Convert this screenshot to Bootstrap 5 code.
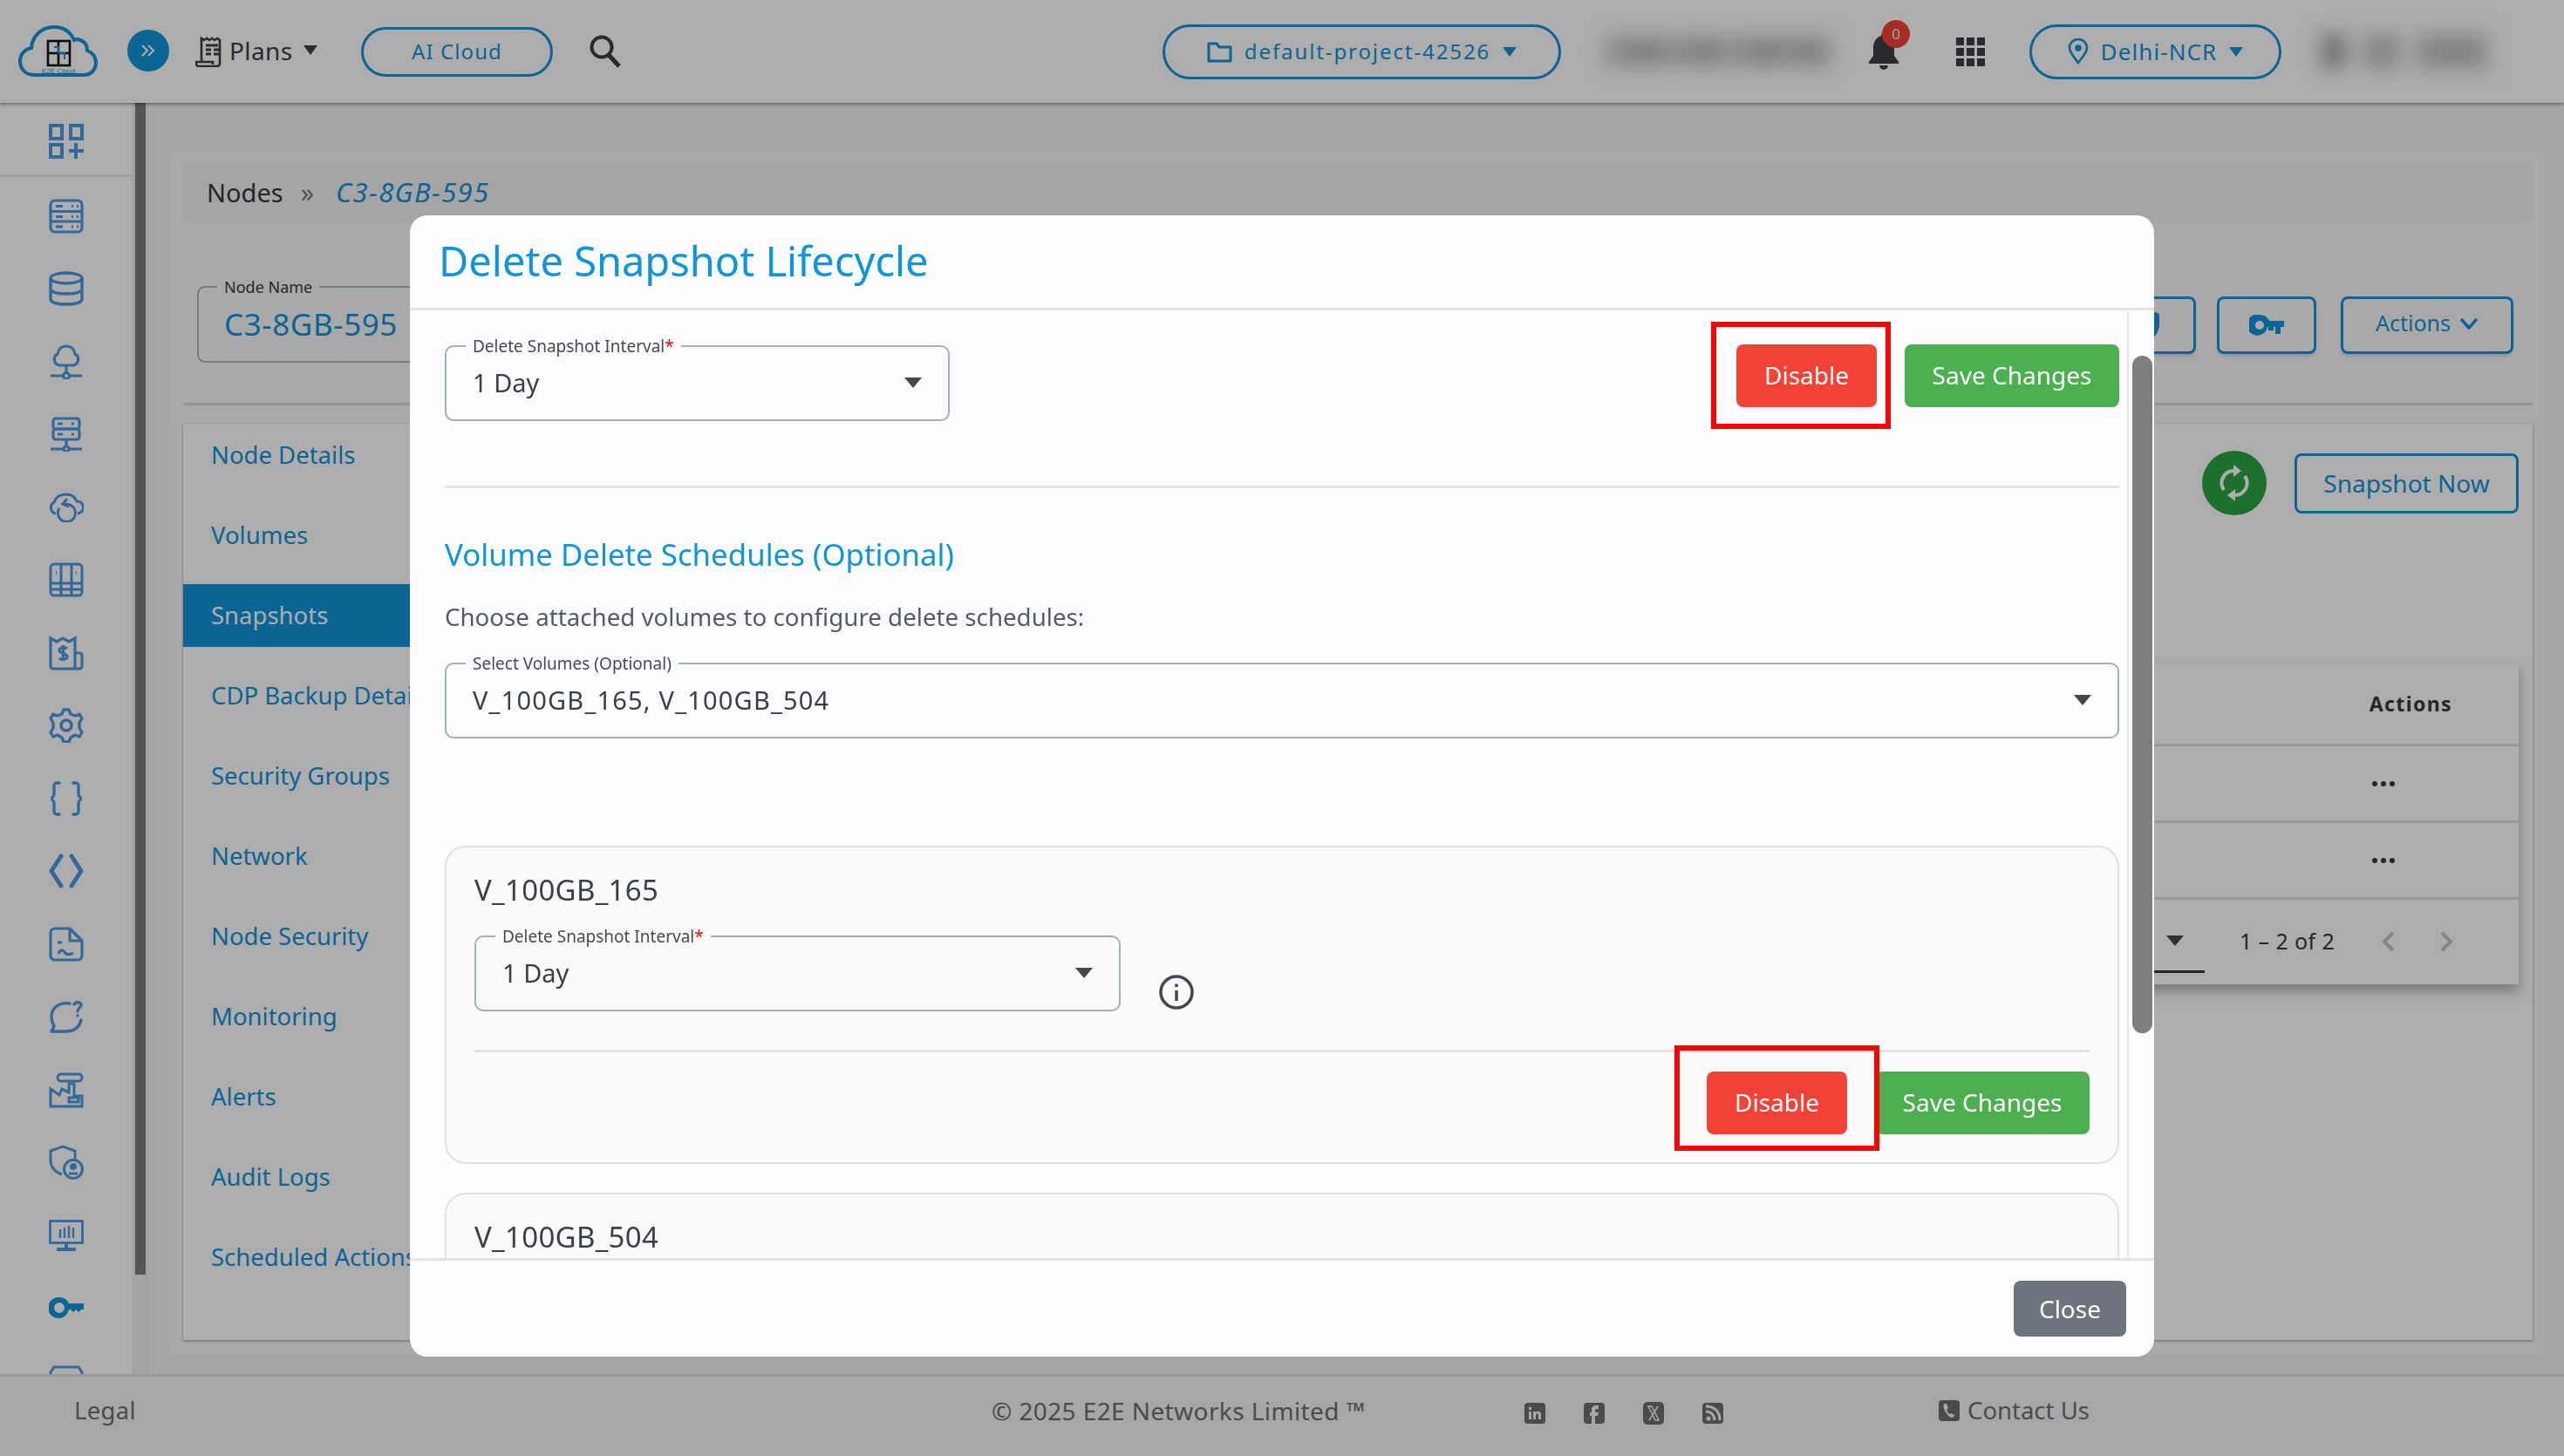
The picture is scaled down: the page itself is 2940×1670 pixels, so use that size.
<!doctype html>
<html lang="en">
<head>
<meta charset="utf-8">
<title>Delete Snapshot Lifecycle</title>
<link href="https://cdn.jsdelivr.net/npm/bootstrap@5.3.0/dist/css/bootstrap.min.css" rel="stylesheet">
<style>
:root{--brand:#0f95dc}
html,body{height:100%}
body{font-family:"Noto Sans","Open Sans",sans-serif;color:#333a42;background:#f4f4f4;font-size:27px;overflow:hidden}
svg{display:block;flex:none}
/* top bar */
.topbar{height:118px;background:#fff;flex:none;box-shadow:0 2px 3px rgba(0,0,0,.35);position:relative;z-index:2}
.tb-logo{margin-left:20px;width:93px;height:62px}
.tb-toggle{margin-left:33px;width:48px;height:48px;border-radius:50%;background:var(--brand);color:#fff;margin-top:-2px}
.tb-plans{margin-left:30px;color:#3a3f44}
.tb-plans span{margin-left:6px;width:74px;font-size:28px;letter-spacing:.4px;margin-top:-3px}
.tb-plans .caret-x{margin-left:11px;margin-top:-3px}
.caret-x{width:0;height:0;border-left:8px solid transparent;border-right:8px solid transparent;border-top:11px solid currentColor}
.tb-pill{border:3px solid var(--brand);border-radius:32px;color:var(--brand);background:transparent;letter-spacing:1.1px;padding:0}
.pill-ai{margin-left:50px;width:220px;height:57px;font-size:24px}
.tb-search{margin-left:42px;width:36px;height:38px;color:#3a3f44}
.pill-proj{margin-left:621px;width:457px;height:63px;font-size:24px;gap:14px;letter-spacing:1.9px}
.pill-loc{margin-left:0;width:289px;height:63px;font-size:26px;gap:14px}
.blur-a{margin-left:50px;width:262px;height:34px;background:linear-gradient(90deg,#c9c9c9,#a8a8a8 18%,#c4c4c4 30%,#a8a8a8 45%,#cccccc 55%,#a6a6a6 70%,#bdbdbd 80%,#a6a6a6 92%,#ddd);filter:blur(11px);opacity:.8}
.tb-bell{margin-left:40px;width:48px;height:60px;color:#3a3f44}
.tb-badge{position:absolute;top:-6px;left:16px;width:32px;height:32px;border-radius:50%;background:#f44336;color:#eee;font-size:17px;line-height:32px;text-align:center}
.tb-grid{margin-left:53px;width:33px;height:33px;color:#3a3f44}
.tb-gap{margin-left:51px}
.blur-b{margin-left:46px;width:200px;height:40px;background:linear-gradient(90deg,#8c8c8c 0 26px,#eee 26px 52px,#b4b4b4 52px 86px,#eee 86px 112px,#b4b4b4 112px 190px,#fff 190px);filter:blur(11px);opacity:.8}
/* rail */
.rail{width:171px;flex:none;background:#fff;position:relative}
.rail-list{width:151px;height:100%;overflow:hidden;color:#4a9be2}
.rail-cell{height:83.500px;flex:none;color:#4a9be2}
.rail-cell:first-child{height:85px;padding-top:6px;border-bottom:3px solid #ececec;margin-bottom:3px}
.rail-track{width:20px;background:#f1f1f1}
.rail-thumb{width:12px;height:1344px;margin-left:4px;background:#7d7d7d}
/* main */
.main-wrap{min-width:0;background:#f4f4f4;border-left:1px solid #f9f9f9}
.panel-x{margin:54px 21px 22px 21px;background:#fafafa;padding:16px 15px 16px 17px;height:calc(100% - 76px)}
.crumbs{height:68px;background:#f4f4f4;border-radius:8px;padding-left:27px;font-size:29px;color:#333a42;padding-bottom:3px}
.crumbs i{color:var(--brand);margin-left:25px;font-size:31px;letter-spacing:1.400px}
.crumbs em{font-style:normal;color:#7a7f85;margin-left:20px;font-size:30px}
.head-row{margin-top:72px;height:88px;padding-left:16px;position:relative}
.node-fld{width:520px;height:88px;border:2px solid #a9b8bb;border-radius:9px;padding:0 29px;color:var(--brand);font-size:35px;letter-spacing:.6px;line-height:84px;margin:0}
.node-fld legend{float:none;width:auto;font-size:18px;letter-spacing:0;color:#333a42;padding:0 8px;margin:0 0 0 -8px;line-height:2px;height:2px}
.head-tools{margin-left:auto;margin-right:22px;margin-top:12px}
.tool-b{width:114px;height:66px;border:3px solid var(--brand);border-radius:8px;background:transparent;color:var(--brand);box-shadow:0 3px 3px rgba(0,0,0,.12);padding:0}
.tool-sh{margin-right:24px}
.tool-ky{margin-right:28px}
.tool-act{width:198px;font-size:25px;gap:10px;padding-bottom:4px}
.rule-x{height:3px;background:#dcdcdc;margin-top:46px}
.work-card{margin-top:21px;height:1051px;background:#fff;box-shadow:0 1px 3px rgba(0,0,0,.4);position:relative}
.side-tabs{width:360px;flex:none;padding-top:0;white-space:nowrap}
.tab-i{height:72px;margin-bottom:20px;padding-left:32px;font-size:27.500px;color:var(--brand);display:flex;align-items:center}
.tab-i.sel{background:var(--brand);color:#fff}
.work-r{min-width:0;padding-right:16px}
.snap-row{margin-top:33px;gap:32px;height:70px}
.sync-c{width:74px;height:74px;border-radius:50%;background:#28a541;color:#fff}
.snap-b{width:257px;height:69px;border:3px solid var(--brand);border-radius:8px;background:transparent;color:var(--brand);font-size:28px;padding:0}
.tbl-card{margin-top:172px;height:368px;background:#fff;box-shadow:0 8px 14px rgba(0,0,0,.3);margin-left:200px}
.tbl-line{border-bottom:3px solid #e2e2e2;height:88px;padding-right:72px}
.tbl-hd{height:95px;font-weight:700;letter-spacing:1.400px;font-size:23px;padding-right:76px}
.dots3{gap:4px;margin-right:70px}
.dots3 b{width:6px;height:6px;border-radius:50%;background:#333a42;display:block}
.tbl-foot{height:95px;color:#333a42;font-size:25px;letter-spacing:.4px;padding-right:0}
.sel-under{width:400px;height:70px;border-bottom:3px solid #333a42;margin-bottom:-2px;padding-right:24px}
.pager-t{margin-left:40px;width:110px;white-space:nowrap}
.pager-c{color:#c8c8c8;margin-left:52px}
.pager-end{margin-right:74px}
/* footer */
.foot-bar{height:94px;flex:none;background:#f6f6f6;border-top:3px solid #dcdfe2;color:#6f6f6f;font-size:27.500px;position:relative;z-index:2;padding-bottom:13px}
.foot-legal{margin-left:85px;width:1052px;letter-spacing:.3px}
.foot-copy{width:611px;font-size:28px;letter-spacing:.4px;white-space:nowrap}
.foot-soc{gap:44px;width:475px;margin-top:6px}
.foot-soc svg{color:#6f6f6f}
.foot-contact{gap:9px;white-space:nowrap}
/* modal */
.modal-backdrop.show{opacity:.32}
.snap-dialog{max-width:2000px;width:2000px;margin:247px auto 0}
.snap-dialog .modal-content{height:1309px;border:0;border-radius:20px;background:#fcfcfe;overflow:hidden;position:relative}
.snap-dialog .modal-header{height:109px;padding:0 33px 2px;border-bottom:3px solid #e2e4e6;flex:none}
.m-title{font-size:47px;font-weight:400;color:var(--brand);line-height:1;margin:0}
.snap-dialog .modal-body{flex:1;padding:0 40px;overflow:hidden;position:relative;min-height:0}
.m-track{position:absolute;top:0;bottom:0;right:0;width:31px;border-left:2px solid #e6e6e6;background:#fcfcfe;z-index:3}
.m-thumb{position:absolute;left:4px;top:52px;width:23px;height:777px;border-radius:12px;background:#7f7f7f}
.snap-dialog .modal-footer{height:113px;padding:0 32px;border-top:3px solid #e2e4e6;flex:none}
.close-b{width:129px;height:64px;font-size:28px;background:#6c757d;border:0;color:#fff;padding:0;border-radius:8px;margin:0}
.fld{border:2px solid #9fb1b9;border-radius:10px;padding:0 30px;font-size:29px;color:#3a4047;height:87px;margin:0;min-width:0}
.fld legend{float:none;width:auto;font-size:19px;color:#444b52;padding:0 8px;margin:0 0 0 -8px;line-height:2px;height:2px}
.fld legend s{text-decoration:none;color:#f00}
.fld .fld-v{height:81px}
.vol-val{letter-spacing:1.200px}
.caret-d{width:0;height:0;border-left:10px solid transparent;border-right:10px solid transparent;border-top:12px solid #43484e}
.top-row{padding-top:40px;height:204px;border-bottom:3px solid #e4e4e4}
.w-top{width:579px}
.act-pair{gap:32px;margin-top:-1px}
.act-b{height:72px;font-size:28px;color:#fff;border:0;border-radius:8px;padding:0 0 2px}
.act-d{width:161px;background:#f44336}
.act-s{width:246px;background:#4caf50}
.hot-box{position:absolute;border:6px solid #f00;pointer-events:none;z-index:2}
.hot-a{left:1492px;top:13px;width:206px;height:123px}
.hot-b{left:1450px;top:843px;width:235px;height:121px}
.sec-h{font-size:34.800px;color:var(--brand);font-weight:400;margin:53px 0 0;line-height:46px}
.sec-p{font-size:27.700px;color:#555c63;margin:30px 0 0;line-height:36px}
.sel-wide{margin-top:35px}
.sub-card{background:#fafafa;border:2px solid #e2e2e2;border-radius:24px;padding:0 32px}
.sub-a{margin-top:123px;height:365px}
.sub-b{margin-top:33px;height:200px}
.sub-t{font-size:33px;color:#3a4047;padding-top:28px;line-height:42px;letter-spacing:.3px}
.sub-f{margin-top:31px;gap:43px}
.w-sub{width:741px}
.info-i{margin-top:44px;color:#43484e}
.sub-rule{height:3px;background:#e2e2e2;margin-top:44px}
.sub-acts{margin-top:22px;gap:32px}
</style>
</head>
<body class="d-flex flex-column">

<header class="topbar d-flex align-items-center">
  <svg class="tb-logo" viewBox="0 0 93 62" fill="none">
    <path d="M20 58C8 58 3 50 3 42c0-8 6-14 13-15C17 13 28 3 42 3c11 0 19 6 23 15 2-1 5-1 7 0 6 2 8 7 8 12 7 3 10 8 10 14 0 8-6 14-14 14Z" stroke="#0f95dc" stroke-width="4"/>
    <rect x="35" y="19" width="25" height="28" fill="none" stroke="#111" stroke-width="2.600"/>
    <path d="M47 19v28M35 33h25" stroke="#111" stroke-width="2.600"/>
    <path d="M42 26h5v7M47 33h7v7" stroke="#0f95dc" stroke-width="2"/>
    <text x="47" y="56" font-size="8" text-anchor="middle" fill="#0f95dc" font-family="Liberation Sans">E2E Cloud</text>
  </svg>
  <button class="tb-toggle btn d-flex align-items-center justify-content-center p-0" type="button" aria-label="Expand">
    <svg width="20" height="20" viewBox="0 0 20 20" fill="none" stroke="#fff" stroke-width="2"><path d="M3 4l6 6-6 6M10 4l6 6-6 6"/></svg>
  </button>
  <div class="tb-plans d-flex align-items-center">
    <svg width="33" height="36" viewBox="0 0 33 36" fill="none" stroke="currentColor" stroke-width="2.600"><path d="M7 30V3l3 2 3-2 3 2 3-2 3 2 3-2 3 2v27a3 3 0 0 1-3 3H4a3 3 0 0 1-3-3v-2h19v3"/><path d="M12 11h14M12 16h6M21 16h6M12 21h6M21 21h6" stroke-width="3"/></svg>
    <span>Plans</span>
    <div class="caret-x"></div>
  </div>
  <button class="tb-pill pill-ai btn" type="button">AI Cloud</button>
  <svg class="tb-search" viewBox="0 0 36 38" fill="none" stroke="currentColor"><circle cx="14" cy="14" r="11.500" stroke-width="4"/><path d="M22 23l12 13" stroke-width="5"/></svg>
  <button class="tb-pill pill-proj btn d-flex align-items-center justify-content-center" type="button">
    <svg width="29" height="25" viewBox="0 0 29 25" fill="none" stroke="currentColor" stroke-width="3"><path d="M2 3h9l3 4h13v16H2z" stroke-linejoin="round"/></svg>
    <span>default-project-42526</span>
    <div class="caret-x"></div>
  </button>
  <div class="blur-a"></div>
  <div class="tb-bell position-relative">
    <svg width="36" height="44" viewBox="0 0 36 44" class="mt-2" fill="currentColor"><path d="M18 0c2 0 3 2 3 4 6 2 9 7 9 14v9l5 7v2H1v-2l5-7v-9c0-7 3-12 9-14 0-2 1-4 3-4Z"/><path d="M13 38h10a5 5 0 0 1-10 0Z"/></svg>
    <span class="tb-badge">0</span>
  </div>
  <svg class="tb-grid" viewBox="0 0 33 33" fill="currentColor"><rect width="9" height="9"/><rect x="12" width="9" height="9"/><rect x="24" width="9" height="9"/><rect y="12" width="9" height="9"/><rect x="12" y="12" width="9" height="9"/><rect x="24" y="12" width="9" height="9"/><rect y="24" width="9" height="9"/><rect x="12" y="24" width="9" height="9"/><rect x="24" y="24" width="9" height="9"/></svg>
  <div class="tb-gap"></div>
  <button class="tb-pill pill-loc btn d-flex align-items-center justify-content-center" type="button">
    <svg width="24" height="30" viewBox="0 0 24 30" fill="none" stroke="currentColor" stroke-width="2.600"><path d="M12 28C6 20 2 16 2 11a10 10 0 0 1 20 0c0 5-4 9-10 17Z"/><circle cx="12" cy="11" r="2.500" fill="currentColor"/></svg>
    <span>Delhi-NCR</span>
    <div class="caret-x"></div>
  </button>
  <div class="blur-b"></div>
</header>

<div class="d-flex flex-grow-1 overflow-hidden">
  <aside class="rail d-flex">
    <div class="rail-list d-flex flex-column">
      <div class="rail-cell d-flex align-items-center justify-content-center"><svg width="40" height="40" viewBox="0 0 40 40" fill="none" stroke="currentColor" stroke-width="4"><rect x="2" y="2" width="13" height="15"/><rect x="25" y="2" width="13" height="15"/><rect x="2" y="24" width="13" height="14"/><path d="M31 22v18M23 31h17"/></svg></div>
      <div class="rail-cell d-flex align-items-center justify-content-center"><svg width="40" height="40" viewBox="0 0 40 40" fill="none" stroke="currentColor" stroke-width="3.200"><rect x="2" y="2" width="36" height="36" rx="5"/><path d="M2 14.500h36M2 26h36"/><path d="M8 8.500h8M8 20.500h8M8 32h8M26 8.500h2M32 8.500h2M26 20.500h2M32 20.500h2M26 32h2M32 32h2"/></svg></div>
      <div class="rail-cell d-flex align-items-center justify-content-center"><svg width="40" height="40" viewBox="0 0 40 40" fill="none" stroke="currentColor" stroke-width="3.400"><ellipse cx="20" cy="8" rx="18" ry="6"/><path d="M2 8v24c0 4 8 6 18 6s18-2 18-6V8M2 20c0 4 8 6 18 6s18-2 18-6"/></svg></div>
      <div class="rail-cell d-flex align-items-center justify-content-center"><svg width="40" height="40" viewBox="0 0 40 40" fill="none" stroke="currentColor" stroke-width="3.200"><path d="M12 24a7 7 0 0 1-2-13C11 5 15 2 20 2s9 3 10 9a7 7 0 0 1-2 13Z"/><path d="M20 24v8M2 36h14M24 36h14"/><circle cx="20" cy="36" r="3.500"/></svg></div>
      <div class="rail-cell d-flex align-items-center justify-content-center"><svg width="40" height="40" viewBox="0 0 40 40" fill="none" stroke="currentColor" stroke-width="3.200"><rect x="5" y="2" width="30" height="12" rx="3"/><rect x="5" y="14" width="30" height="12" rx="3"/><path d="M10 8h6M10 20h6M26 8h3M26 20h3M20 26v7M2 37h14M24 37h14"/><circle cx="20" cy="37" r="3"/></svg></div>
      <div class="rail-cell d-flex align-items-center justify-content-center"><svg width="40" height="34" viewBox="0 0 40 34" fill="none" stroke="currentColor" stroke-width="3"><path d="M8 24a7 7 0 0 1-2-13C8 5 13 2 20 2c6 0 10 3 12 8a7 7 0 0 1 1 14"/><path d="M12 18a10 10 0 1 0 5-4"/><path d="M21 7l-5 6 7 3"/></svg></div>
      <div class="rail-cell d-flex align-items-center justify-content-center"><svg width="40" height="40" viewBox="0 0 40 40" fill="none" stroke="currentColor" stroke-width="3"><rect x="2" y="2" width="36" height="36" rx="4"/><path d="M14 2v36M26 2v36M2 24h36M2 31h36"/><path d="M8 12h1M31 12h1" stroke-width="3.500"/></svg></div>
      <div class="rail-cell d-flex align-items-center justify-content-center"><svg width="40" height="40" viewBox="0 0 40 40" fill="none" stroke="currentColor" stroke-width="3.200"><path d="M30 38H5a3 3 0 0 1-3-3V3l7 4 7-4 7 4 7-4v35"/><path d="M30 20h5a3 3 0 0 1 3 3v12a3 3 0 0 1-3 3h-5"/><path d="M21 15c-2-2-9-2-9 2s9 3 9 7-7 4-9 2M16.500 11v18"/></svg></div>
      <div class="rail-cell d-flex align-items-center justify-content-center"><svg width="40" height="40" viewBox="0 0 40 40" fill="none" stroke="currentColor" stroke-width="3.400"><circle cx="20" cy="20" r="6"/><path d="M17 2h6l2 5 5 2 5-2 3 5-3 5v6l3 5-3 5-5-2-5 3-2 5h-6l-2-5-5-3-5 2-3-5 3-5v-6l-3-5 3-5 5 2 5-2Z" stroke-linejoin="round"/></svg></div>
      <div class="rail-cell d-flex align-items-center justify-content-center"><svg width="40" height="40" viewBox="0 0 40 40" fill="none" stroke="currentColor" stroke-width="3.400" stroke-linecap="round"><path d="M12 2H9a3 3 0 0 0-3 3v9c0 3-2 6-4 6 2 0 4 3 4 6v9a3 3 0 0 0 3 3h3M28 2h3a3 3 0 0 1 3 3v9c0 3 2 6 4 6-2 0-4 3-4 6v9a3 3 0 0 1-3 3h-3"/></svg></div>
      <div class="rail-cell d-flex align-items-center justify-content-center"><svg width="40" height="40" viewBox="0 0 40 40" fill="none" stroke="currentColor" stroke-width="5" stroke-linecap="round" stroke-linejoin="round"><path d="M14 3L3 20l11 17M26 3l11 17-11 17"/></svg></div>
      <div class="rail-cell d-flex align-items-center justify-content-center"><svg width="40" height="40" viewBox="0 0 40 40" fill="none" stroke="currentColor" stroke-width="3.200" stroke-linejoin="round"><path d="M24 2H7a5 5 0 0 0-5 5v26a5 5 0 0 0 5 5h26a5 5 0 0 0 5-5V16Z"/><path d="M24 2v14h14"/><path d="M10 18h5M11 31c2-5 5-5 7-2s5 4 10 1"/></svg></div>
      <div class="rail-cell d-flex align-items-center justify-content-center"><svg width="40" height="40" viewBox="0 0 40 40" fill="none" stroke="currentColor" stroke-width="3.400" stroke-linecap="round"><path d="M24 5C12 3 3 10 3 20c0 5 2 9 3 11-1 3-2 5-4 6h17c10 0 16-5 18-13"/><path d="M29 6c1-3 7-3 8 0s-4 4-4 8M33 19h.01"/></svg></div>
      <div class="rail-cell d-flex align-items-center justify-content-center"><svg width="40" height="42" viewBox="0 0 40 42" fill="none" stroke="currentColor" stroke-width="3"><path d="M2 40V20l10 7 3-7 8 4V14h6v14h9v12Z"/><path d="M14 3h20a3 3 0 0 1 0 8H14a3 3 0 0 1 0-8Z"/><rect x="23" y="30" width="11" height="5"/></svg></div>
      <div class="rail-cell d-flex align-items-center justify-content-center"><svg width="40" height="40" viewBox="0 0 40 40" fill="none" stroke="currentColor" stroke-width="3"><path d="M30 16V7L16 2 2 7v11c0 8 6 14 13 16"/><circle cx="28" cy="28" r="10.500"/><circle cx="28" cy="25" r="2.500" fill="currentColor"/><path d="M23 33h10"/></svg></div>
      <div class="rail-cell d-flex align-items-center justify-content-center"><svg width="40" height="36" viewBox="0 0 40 36" fill="none" stroke="currentColor" stroke-width="2.800"><rect x="1.500" y="1.500" width="37" height="25"/><path d="M13 11v10M18 9v12M23 7v14M28 9v12" stroke-width="2.400"/><path d="M20 27v6M9 34h22" stroke-width="4"/></svg></div>
      <div class="rail-cell d-flex align-items-center justify-content-center"><svg width="40" height="24" viewBox="0 0 40 24" fill="#0f95dc"><path d="M12 0a12 12 0 0 1 11 7h17v7h-3l-3 3-3-3-3 3-3-3h-2A12 12 0 1 1 12 0Zm0 6a6 6 0 1 0 0 12 6 6 0 0 0 0-12Z"/></svg></div>
      <div class="rail-cell d-flex align-items-start justify-content-center pt-4"><svg width="40" height="40" viewBox="0 0 40 40" fill="none" stroke="currentColor" stroke-width="3"><path d="M2 38V8l4-6h28l4 6v30Z"/></svg></div>
    </div>
    <div class="rail-track"><div class="rail-thumb"></div></div>
  </aside>

  <main class="main-wrap flex-grow-1">
    <div class="panel-x">
      <div class="crumbs d-flex align-items-center"><span>Nodes</span><em>&raquo;</em><i>C3-8GB-595</i></div>
      <div class="head-row d-flex align-items-start">
        <fieldset class="node-fld"><legend>Node Name</legend>C3-8GB-595</fieldset>
        <div class="head-tools d-flex">
          <button class="tool-b tool-sh btn d-flex align-items-center justify-content-center" type="button" aria-label="Security"><svg width="34" height="40" viewBox="0 0 34 40" fill="currentColor"><path d="M17 1 32 7v12c0 10-7 17-15 20C9 36 2 29 2 19V7Z"/></svg></button>
          <button class="tool-b tool-ky btn d-flex align-items-center justify-content-center" type="button" aria-label="SSH keys"><svg width="40" height="24" viewBox="0 0 40 24" fill="currentColor"><path d="M12 0a12 12 0 0 1 11 7h17v7h-4v8h-6v-8h-2v4h-6v-4h-1A12 12 0 1 1 12 0Zm0 7a5 5 0 1 0 0 10 5 5 0 0 0 0-10Z"/></svg></button>
          <button class="tool-b tool-act btn d-flex align-items-center justify-content-center" type="button">Actions <svg width="22" height="14" viewBox="0 0 22 14" fill="none" stroke="currentColor" stroke-width="3.500"><path d="M2 2l9 10 9-10"/></svg></button>
        </div>
      </div>
      <div class="rule-x"></div>
      <div class="work-card d-flex">
        <nav class="side-tabs" aria-label="Node sections">
          <div class="tab-i">Node Details</div>
          <div class="tab-i">Volumes</div>
          <div class="tab-i sel">Snapshots</div>
          <div class="tab-i">CDP Backup Details</div>
          <div class="tab-i">Security Groups</div>
          <div class="tab-i">Network</div>
          <div class="tab-i">Node Security</div>
          <div class="tab-i">Monitoring</div>
          <div class="tab-i">Alerts</div>
          <div class="tab-i">Audit Logs</div>
          <div class="tab-i">Scheduled Actions</div>
        </nav>
        <div class="work-r flex-grow-1">
          <div class="snap-row d-flex justify-content-end align-items-center">
            <div class="sync-c d-flex align-items-center justify-content-center"><svg width="36" height="44" viewBox="0 0 36 44" fill="none" stroke="#fff" stroke-width="4"><path d="M6 30a14 14 0 0 1 12-22"/><path d="M30 14a14 14 0 0 1-12 22"/><path d="M17 1l9 7-9 7Z M19 29l-9 7 9 7Z" fill="#fff" stroke="none"/></svg></div>
            <button class="snap-b btn" type="button">Snapshot Now</button>
          </div>
          <div class="tbl-card">
            <div class="tbl-line tbl-hd d-flex align-items-center justify-content-end">Actions</div>
            <div class="tbl-line d-flex align-items-center justify-content-end"><div class="dots3 d-flex"><b></b><b></b><b></b></div></div>
            <div class="tbl-line d-flex align-items-center justify-content-end"><div class="dots3 d-flex"><b></b><b></b><b></b></div></div>
            <div class="tbl-foot d-flex align-items-center">
              <div class="ms-auto sel-under d-flex align-items-center justify-content-end"><div class="caret-d"></div></div>
              <span class="pager-t">1 – 2 of 2</span>
              <svg class="pager-c" width="16" height="24" viewBox="0 0 16 24" fill="none" stroke="currentColor" stroke-width="4"><path d="M14 2 4 12l10 10"/></svg>
              <svg class="pager-c pager-end" width="16" height="24" viewBox="0 0 16 24" fill="none" stroke="currentColor" stroke-width="4"><path d="M2 2l10 10L2 22"/></svg>
            </div>
          </div>
        </div>
      </div>
    </div>
  </main>
</div>

<footer class="foot-bar d-flex align-items-center">
  <span class="foot-legal">Legal</span>
  <span class="foot-copy">© 2025 E2E Networks Limited ™</span>
  <div class="foot-soc d-flex align-items-center">
    <svg width="24" height="24" viewBox="0 0 24 24"><rect width="24" height="24" rx="4" fill="currentColor"/><path d="M5 10h3v9H5zM5 5h3v3H5zM10 10h3v1c2-2 6-2 6 3v5h-3v-5c0-2-3-2-3 0v5h-3z" fill="#f6f6f6"/></svg>
    <svg width="24" height="24" viewBox="0 0 24 24"><rect width="24" height="24" rx="4" fill="currentColor"/><path d="M13 24v-9h3l1-4h-4V9c0-1 1-2 2-2h2V3h-3c-3 0-5 2-5 5v3H7v4h2v9z" fill="#f6f6f6"/></svg>
    <svg width="24" height="26" viewBox="0 0 24 26"><rect width="24" height="26" rx="5" fill="currentColor"/><path d="M6 5h4l8 16h-4zM17 5l-10 16" stroke="#f6f6f6" stroke-width="1.500" fill="none"/></svg>
    <svg width="24" height="24" viewBox="0 0 24 24"><rect width="24" height="24" rx="4" fill="currentColor"/><circle cx="7" cy="18" r="2.500" fill="#f6f6f6"/><path d="M4 10c6 0 10 4 10 10M4 4c10 0 16 6 16 16" stroke="#f6f6f6" stroke-width="3" fill="none"/></svg>
  </div>
  <div class="foot-contact d-flex align-items-center">
    <svg width="24" height="24" viewBox="0 0 24 24"><rect width="24" height="24" rx="4" fill="currentColor"/><path d="M7 4c-2 1-2 4 0 8s5 7 8 8c2 0 3-1 3-3l-4-2-2 1c-1-1-2-3-3-5l2-2-2-5Z" fill="#f6f6f6"/></svg>
    <span>Contact Us</span>
  </div>
</footer>

<div class="modal-backdrop show"></div>
<div class="modal d-block" tabindex="-1" role="dialog" aria-modal="true">
  <div class="modal-dialog snap-dialog">
    <div class="modal-content">
      <div class="modal-header"><h1 class="m-title">Delete Snapshot Lifecycle</h1></div>
      <div class="modal-body">
        <div class="m-track"><div class="m-thumb"></div></div>
        <div class="hot-box hot-a"></div>
        <div class="hot-box hot-b"></div>
        <div class="top-row d-flex justify-content-between align-items-start">
          <fieldset class="fld w-top"><legend>Delete Snapshot Interval<s>*</s></legend>
            <div class="fld-v d-flex align-items-center justify-content-between"><span>1 Day</span><div class="caret-d"></div></div>
          </fieldset>
          <div class="act-pair d-flex">
            <button class="act-b act-d btn" type="button">Disable</button>
            <button class="act-b act-s btn" type="button">Save Changes</button>
          </div>
        </div>
        <h2 class="sec-h">Volume Delete Schedules (Optional)</h2>
        <p class="sec-p">Choose attached volumes to configure delete schedules:</p>
        <fieldset class="fld sel-wide"><legend>Select Volumes (Optional)</legend>
          <div class="fld-v d-flex align-items-center justify-content-between"><span class="vol-val">V_100GB_165, V_100GB_504</span><div class="caret-d"></div></div>
        </fieldset>
        <div class="sub-card sub-a">
          <div class="sub-t">V_100GB_165</div>
          <div class="sub-f d-flex align-items-start">
            <fieldset class="fld w-sub"><legend>Delete Snapshot Interval<s>*</s></legend>
              <div class="fld-v d-flex align-items-center justify-content-between"><span>1 Day</span><div class="caret-d"></div></div>
            </fieldset>
            <svg class="info-i" width="42" height="42" viewBox="0 0 42 42" fill="none" stroke="currentColor" stroke-width="3.500"><circle cx="21" cy="21" r="18"/><path d="M21 19v12"/><path d="M21 11.500v3.500"/></svg>
          </div>
          <div class="sub-rule"></div>
          <div class="sub-acts d-flex justify-content-end">
            <button class="act-b act-d btn" type="button">Disable</button>
            <button class="act-b act-s btn" type="button">Save Changes</button>
          </div>
        </div>
        <div class="sub-card sub-b"><div class="sub-t">V_100GB_504</div></div>
      </div>
      <div class="modal-footer"><button class="close-b btn" type="button">Close</button></div>
    </div>
  </div>
</div>
<script src="https://cdn.jsdelivr.net/npm/bootstrap@5.3.0/dist/js/bootstrap.bundle.min.js"></script>
</body>
</html>
